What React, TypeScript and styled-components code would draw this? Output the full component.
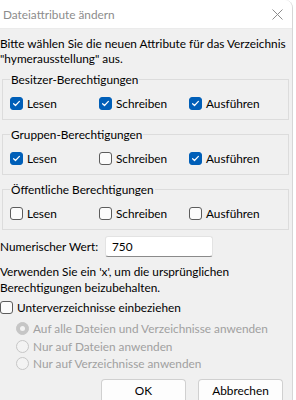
import React from "react";
import styled, { createGlobalStyle } from "styled-components";

const Global = createGlobalStyle`
  html, body { margin: 0; padding: 0; background: #ffffff; }
  body {
    font-family: Lato, "Segoe UI", sans-serif;
    font-size: 11.8px;
    color: #000;
  }
`;

const Window = styled.div`
  width: 292px;
  height: 400px;
  overflow: hidden;
  border-right: 1px solid #d6d6d6;
  border-top-right-radius: 8px;
  display: flex;
  flex-direction: column;
  background: #f0f0f0;
  white-space: nowrap;
`;

const TitleBar = styled.div`
  height: 28px;
  flex: none;
  background: #ffffff;
  border-bottom: 1px solid #ebebeb;
  display: flex;
  align-items: center;
  justify-content: space-between;
  padding-left: 3px;
`;

const Title = styled.span`
  color: #8c8c8c;
  line-height: 15px;
`;

const Close = styled.svg`
  width: 11px;
  height: 11px;
  margin-right: 9px;
`;

const Content = styled.div`
  display: flex;
  flex-direction: column;
  padding-top: 7px;
`;

const Text = styled.p`
  margin: 0;
  line-height: 15px;
`;

const Hint = styled.p`
  margin: 7px 0 0 0;
  line-height: 16px;
`;

const GroupBox = styled.fieldset<{ $first?: boolean }>`
  margin: ${(p) => (p.$first ? "6px" : "7px")} 3px 0 2px;
  border: 1px solid #dcdcdc;
  padding: 0 0 8px 7px;
  min-width: 0;
`;

const Legend = styled.legend`
  padding: 0 1px;
  line-height: 15px;
`;

const CheckRow = styled.div`
  display: grid;
  grid-template-columns: 89px 90px auto;
  margin-top: 9px;
  height: 15px;
`;

const CheckLabel = styled.label<{ $disabled?: boolean }>`
  display: flex;
  align-items: center;
  gap: 4px;
  line-height: 15px;
  height: 15px;
  color: ${(p) => (p.$disabled ? "#a0a0a0" : "#000")};
  white-space: nowrap;
`;

const Box = styled.span<{ $checked?: boolean }>`
  box-sizing: border-box;
  width: 13px;
  height: 13px;
  flex: none;
  border-radius: 3px;
  background: ${(p) => (p.$checked ? "#005fb8" : "#fbfbfb")};
  border: 1px solid ${(p) => (p.$checked ? "#005fb8" : "#5c5c5c")};
  display: flex;
  align-items: center;
  justify-content: center;
`;

const Radio = styled.span<{ $checked?: boolean }>`
  box-sizing: border-box;
  width: 13px;
  height: 13px;
  flex: none;
  border-radius: 50%;
  background: ${(p) => (p.$checked ? "#c6c6c6" : "#f3f3f3")};
  border: 1px solid #c6c6c6;
  display: flex;
  align-items: center;
  justify-content: center;
  &::after {
    content: "";
    display: ${(p) => (p.$checked ? "block" : "none")};
    width: 5px;
    height: 5px;
    border-radius: 50%;
    background: #f3f3f3;
  }
`;

const ValueRow = styled.div`
  display: flex;
  align-items: center;
  margin-top: 6px;
  height: 21px;
`;

const ValueLabel = styled.span`
  width: 105px;
  flex: none;
  line-height: 15px;
`;

const ValueInput = styled.div`
  box-sizing: border-box;
  width: 108px;
  height: 21px;
  background: #ffffff;
  border: 1px solid #e3e3e3;
  border-bottom-color: #8a8a8a;
  border-radius: 3px;
  padding-left: 6px;
  display: flex;
  align-items: center;
  line-height: 15px;
`;

const SubRow = styled.div`
  margin-top: 4px;
`;

const RadioGroup = styled.div`
  display: flex;
  flex-direction: column;
  margin-top: 5px;
  padding-left: 16px;
`;

const RadioRow = styled(CheckLabel)`
  height: 17.5px;
  gap: 4px;
`;

const Buttons = styled.div`
  display: flex;
  justify-content: flex-end;
  gap: 12px;
  margin-top: 6px;
  padding-right: 9px;
`;

const Button = styled.div`
  box-sizing: border-box;
  width: 85px;
  height: 24px;
  background: #fdfdfd;
  border: 1px solid #d0d0d0;
  border-bottom-color: #b8b8b8;
  border-radius: 4px;
  display: flex;
  align-items: center;
  justify-content: center;
  line-height: 15px;
`;

const Tick = () => (
  <svg width="9" height="9" viewBox="0 0 9 9">
    <path d="M1.6 4.7 L3.5 6.5 L7.4 2.4" fill="none" stroke="#fff" strokeWidth="1.2" strokeLinecap="round" strokeLinejoin="round" />
  </svg>
);

const Check = ({ label, checked }: { label: string; checked?: boolean }) => (
  <CheckLabel>
    <Box $checked={checked}>{checked && <Tick />}</Box>
    {label}
  </CheckLabel>
);

const groups: { title: string; vals: boolean[] }[] = [
  { title: "Besitzer-Berechtigungen", vals: [true, true, true] },
  { title: "Gruppen-Berechtigungen", vals: [true, false, true] },
  { title: "Öffentliche Berechtigungen", vals: [false, false, false] },
];
const names = ["Lesen", "Schreiben", "Ausführen"];

export default function App() {
  return (
    <>
      <Global />
      <Window>
        <TitleBar>
          <Title>Dateiattribute ändern</Title>
          <Close viewBox="0 0 11 11">
            <path d="M0.5 0.5 L10.5 10.5 M10.5 0.5 L0.5 10.5" stroke="#8c8c8c" strokeWidth="1" fill="none" />
          </Close>
        </TitleBar>
        <Content>
          <Text>
            Bitte wählen Sie die neuen Attribute für das Verzeichnis
            <br />
            "hymerausstellung" aus.
          </Text>
          {groups.map((g, i) => (
            <GroupBox key={g.title} $first={i === 0}>
              <Legend>{g.title}</Legend>
              <CheckRow>
                {names.map((n, j) => (
                  <Check key={n} label={n} checked={g.vals[j]} />
                ))}
              </CheckRow>
            </GroupBox>
          ))}
          <ValueRow>
            <ValueLabel>Numerischer Wert:</ValueLabel>
            <ValueInput>750</ValueInput>
          </ValueRow>
          <Hint>
            Verwenden Sie ein 'x', um die ursprünglichen
            <br />
            Berechtigungen beizubehalten.
          </Hint>
          <SubRow>
            <Check label="Unterverzeichnisse einbeziehen" />
          </SubRow>
          <RadioGroup>
            <RadioRow $disabled>
              <Radio $checked />
              Auf alle Dateien und Verzeichnisse anwenden
            </RadioRow>
            <RadioRow $disabled>
              <Radio />
              Nur auf Dateien anwenden
            </RadioRow>
            <RadioRow $disabled>
              <Radio />
              Nur auf Verzeichnisse anwenden
            </RadioRow>
          </RadioGroup>
          <Buttons>
            <Button>OK</Button>
            <Button>Abbrechen</Button>
          </Buttons>
        </Content>
      </Window>
    </>
  );
}
